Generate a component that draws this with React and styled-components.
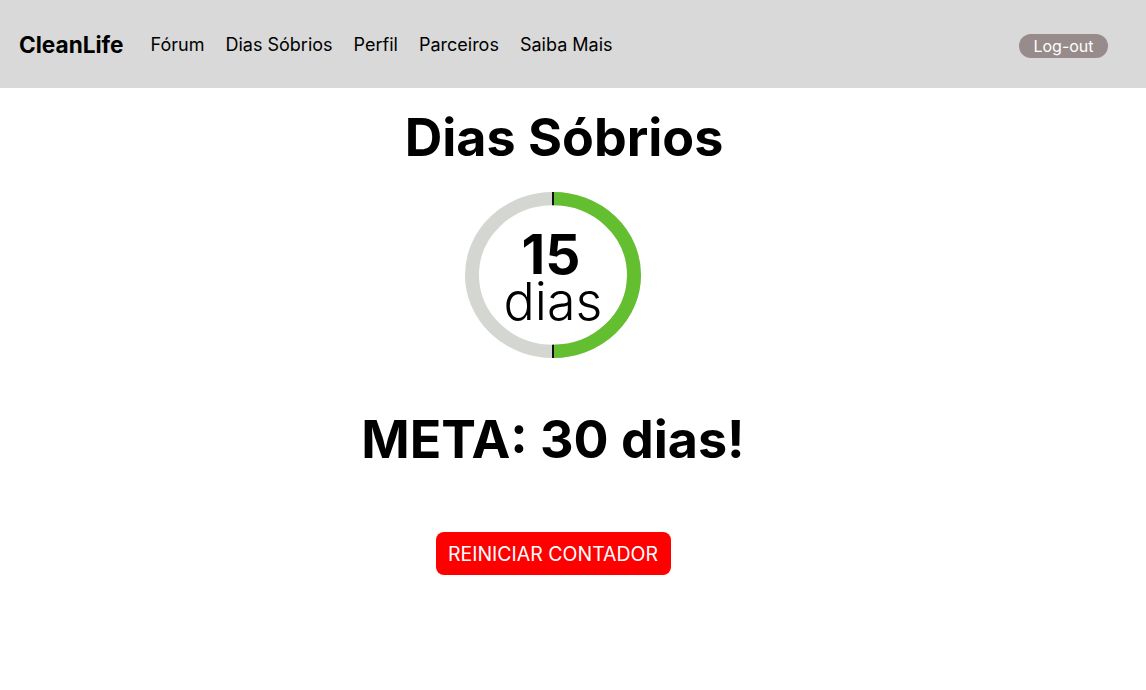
import styled, { createGlobalStyle } from "styled-components";

const GlobalStyle = createGlobalStyle`
  body {
    margin: 0;
    background: #ffffff;
    font-family: Inter, "Liberation Sans", sans-serif;
    color: #000;
  }
`;

const Header = styled.header`
  height: 88px;
  background-color: #d9d9d9;
  display: flex;
  align-items: center;
  padding: 0 38px 0 19px;
`;

const Logo = styled.span`
  font-size: 22.6px;
  font-weight: 700;
  margin-right: 27px;
`;

const Nav = styled.nav`
  display: flex;
  gap: 21px;
  flex: 1;
`;

const NavLink = styled.a`
  font-size: 18px;
  color: #000;
  text-decoration: none;
  cursor: pointer;
`;

const LogoutButton = styled.button`
  width: 89px;
  height: 24px;
  margin-top: 4px;
  border: none;
  border-radius: 12px;
  background-color: #978b8b;
  color: #fff;
  font-family: inherit;
  font-size: 16px;
  padding: 0;
  cursor: pointer;
`;

const Main = styled.main`
  display: flex;
  flex-direction: column;
  align-items: center;
  padding-right: 40px;
`;

const Title = styled.h1`
  font-size: 52px;
  font-weight: 700;
  line-height: 62px;
  margin: 19px 0 0 22px;
`;

const Counter = styled.div`
  position: relative;
  width: 176px;
  height: 166px;
  margin-top: 23px;
`;

const CounterText = styled.div`
  position: absolute;
  inset: 0;
  display: flex;
  flex-direction: column;
  align-items: center;
  padding-top: 40px;
  padding-right: 4px;
`;

const Days = styled.span`
  font-size: 55px;
  font-weight: 700;
  line-height: 44px;
`;

const DaysLabel = styled.span`
  font-size: 52px;
  font-weight: 300;
  line-height: 52px;
  padding-left: 4px;
`;

const Goal = styled.h2`
  font-size: 52px;
  font-weight: 700;
  line-height: 65px;
  margin: 49px 0 0;
`;

const ResetButton = styled.button`
  margin-top: 60px;
  width: 235px;
  height: 43px;
  border: none;
  border-radius: 8px;
  background-color: #ff0000;
  color: #fff;
  font-family: inherit;
  font-size: 19.5px;
  padding: 0;
  cursor: pointer;
`;

const ProgressRing = ({ value, goal }) => {
  const r = 81;
  const c = 2 * Math.PI * r;
  const part = (value / goal) * c;
  return (
    <svg width="176" height="166" viewBox="0 0 176 176" preserveAspectRatio="none">
      <circle cx="88" cy="88" r={r} fill="none" stroke="#d3d6d1" strokeWidth="14" />
      <circle
        cx="88"
        cy="88"
        r={r}
        fill="none"
        stroke="#63bf2f"
        strokeWidth="14"
        strokeDasharray={`${part} ${c}`}
        transform="rotate(-90 88 88)"
      />
      <line x1="88" y1="0" x2="88" y2="14" stroke="#111" strokeWidth="2" />
      <line x1="88" y1="162" x2="88" y2="176" stroke="#111" strokeWidth="2" />
    </svg>
  );
};

export default function App() {
  return (
    <>
      <GlobalStyle />
      <Header>
        <Logo>CleanLife</Logo>
        <Nav>
          <NavLink>Fórum</NavLink>
          <NavLink>Dias Sóbrios</NavLink>
          <NavLink>Perfil</NavLink>
          <NavLink>Parceiros</NavLink>
          <NavLink>Saiba Mais</NavLink>
        </Nav>
        <LogoutButton>Log-out</LogoutButton>
      </Header>
      <Main>
        <Title>Dias Sóbrios</Title>
        <Counter>
          <ProgressRing value={15} goal={30} />
          <CounterText>
            <Days>15</Days>
            <DaysLabel>dias</DaysLabel>
          </CounterText>
        </Counter>
        <Goal>META: 30 dias!</Goal>
        <ResetButton>REINICIAR CONTADOR</ResetButton>
      </Main>
    </>
  );
}
